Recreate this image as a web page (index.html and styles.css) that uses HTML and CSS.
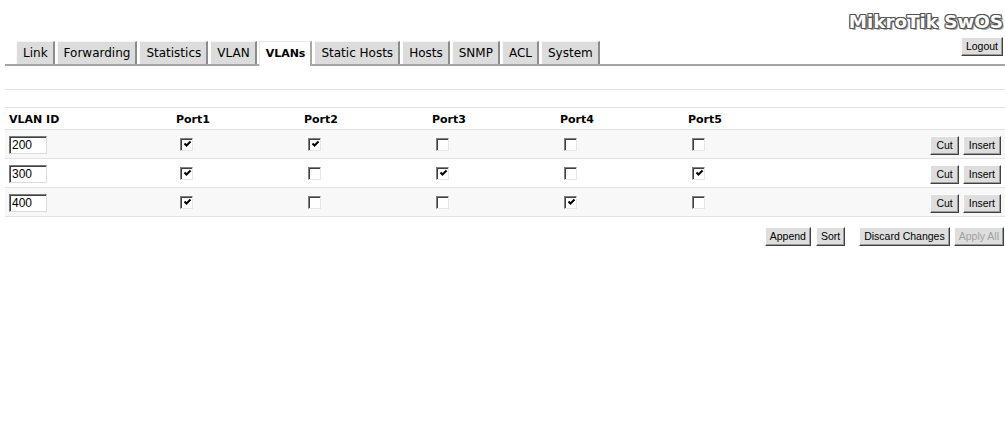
FILE: index.html
```html
<!DOCTYPE html>
<html>
<head>
<meta charset="utf-8">
<title>MikroTik SwOS</title>
<link rel="stylesheet" href="styles.css">
</head>
<body>
<div class="page">
  <header class="top">
    <nav class="tabs">
      <span class="tab">Link</span>
      <span class="tab">Forwarding</span>
      <span class="tab">Statistics</span>
      <span class="tab">VLAN</span>
      <span class="tab active">VLANs</span>
      <span class="tab">Static Hosts</span>
      <span class="tab">Hosts</span>
      <span class="tab">SNMP</span>
      <span class="tab">ACL</span>
      <span class="tab">System</span>
    </nav>
    <div class="brand">
      <div class="title">MikroTik SwOS</div>
      <button class="btn">Logout</button>
    </div>
  </header>
  <div class="spacer s1"></div>
  <div class="spacer s2"></div>
  <table class="grid">
    <colgroup>
      <col class="c-id"><col class="c-port"><col class="c-port"><col class="c-port"><col class="c-port"><col class="c-port"><col>
    </colgroup>
    <thead>
      <tr><th>VLAN ID</th><th>Port1</th><th>Port2</th><th>Port3</th><th>Port4</th><th>Port5</th><th></th></tr>
    </thead>
    <tbody>
      <tr class="odd">
        <td><input class="field" type="text" value="200"></td>
        <td><span class="cb on"><svg viewBox="0 0 9 9" width="9" height="9"><polyline points="1.5,3.5 3.5,5.5 7.5,1.5" fill="none" stroke="#000" stroke-width="2"/></svg></span></td>
        <td><span class="cb on"><svg viewBox="0 0 9 9" width="9" height="9"><polyline points="1.5,3.5 3.5,5.5 7.5,1.5" fill="none" stroke="#000" stroke-width="2"/></svg></span></td>
        <td><span class="cb"></span></td>
        <td><span class="cb"></span></td>
        <td><span class="cb"></span></td>
        <td class="ops"><button class="btn">Cut</button><button class="btn">Insert</button></td>
      </tr>
      <tr>
        <td><input class="field" type="text" value="300"></td>
        <td><span class="cb on"><svg viewBox="0 0 9 9" width="9" height="9"><polyline points="1.5,3.5 3.5,5.5 7.5,1.5" fill="none" stroke="#000" stroke-width="2"/></svg></span></td>
        <td><span class="cb"></span></td>
        <td><span class="cb on"><svg viewBox="0 0 9 9" width="9" height="9"><polyline points="1.5,3.5 3.5,5.5 7.5,1.5" fill="none" stroke="#000" stroke-width="2"/></svg></span></td>
        <td><span class="cb"></span></td>
        <td><span class="cb on"><svg viewBox="0 0 9 9" width="9" height="9"><polyline points="1.5,3.5 3.5,5.5 7.5,1.5" fill="none" stroke="#000" stroke-width="2"/></svg></span></td>
        <td class="ops"><button class="btn">Cut</button><button class="btn">Insert</button></td>
      </tr>
      <tr class="odd">
        <td><input class="field" type="text" value="400"></td>
        <td><span class="cb on"><svg viewBox="0 0 9 9" width="9" height="9"><polyline points="1.5,3.5 3.5,5.5 7.5,1.5" fill="none" stroke="#000" stroke-width="2"/></svg></span></td>
        <td><span class="cb"></span></td>
        <td><span class="cb"></span></td>
        <td><span class="cb on"><svg viewBox="0 0 9 9" width="9" height="9"><polyline points="1.5,3.5 3.5,5.5 7.5,1.5" fill="none" stroke="#000" stroke-width="2"/></svg></span></td>
        <td><span class="cb"></span></td>
        <td class="ops"><button class="btn">Cut</button><button class="btn">Insert</button></td>
      </tr>
    </tbody>
  </table>
  <div class="actions">
    <button class="btn">Append</button>
    <button class="btn b-sort">Sort</button>
    <button class="btn b-discard">Discard Changes</button>
    <button class="btn b-apply" disabled>Apply All</button>
  </div>
</div>
</body>
</html>
```

FILE: styles.css
```css
html, body {
  margin: 0;
  padding: 0;
  background: #fff;
}

body {
  font-family: "DejaVu Sans", Verdana, sans-serif;
  color: #000;
}

.page {
  padding-left: 5px;
}

.top {
  display: flex;
  justify-content: space-between;
  align-items: flex-end;
  border-bottom: 2px solid #a4a4a4;
  height: 64px;
}

.tabs {
  display: flex;
  align-items: flex-end;
  padding-left: 11px;
}

.tab {
  display: block;
  font-size: 12px;
  line-height: 15px;
  padding: 4px 5px 3px 6px;
  background: #dcdcdc;
  border-top: 1px solid #f4f4f4;
  border-left: 1px solid #fafafa;
  border-right: 2px solid #8c8c8c;
  margin-right: 2px;
  color: #000;
}

.tab.active {
  background: #fff;
  font-weight: bold;
  font-size: 11px;
  margin-bottom: -2px;
  padding-bottom: 5px;
  border-top: 1px solid #e8e8e8;
  border-left: 1px solid #e8e8e8;
  border-right: 2px solid #a8a8a8;
}

.brand {
  display: flex;
  flex-direction: column;
  align-items: flex-end;
  padding-right: 2px;
  margin-bottom: 8px;
}

.title {
  font-family: "DejaVu Sans", Verdana, sans-serif;
  font-weight: bold;
  font-size: 18.3px;
  line-height: 21px;
  color: #fff;
  padding-right: 0;
  text-shadow:
    1px 0 0 #555, -1px 0 0 #555, 0 1px 0 #555, 0 -1px 0 #555,
    1px 1px 0 #555, -1px -1px 0 #555, 1px -1px 0 #555, -1px 1px 0 #555,
    2px 2px 0 #aaa;
  margin-bottom: 5px;
}

.btn {
  font-family: "Liberation Sans", Arial, sans-serif;
  font-size: 10.5px;
  line-height: 15px;
  height: 19px;
  padding: 0 4px;
  margin: 0;
  background: #dedede;
  color: #000;
  border: 1px solid;
  border-color: #fdfdfd #404040 #404040 #fdfdfd;
  box-shadow: inset -1px -1px 0 #999;
  border-radius: 0;
  cursor: default;
}

.ops .btn {
  padding: 0 5px;
}

.btn:disabled {
  color: #a0a0a0;
}

.spacer {
  border-bottom: 1px solid #e2e2e2;
}

.s1 { height: 23px; }
.s2 { height: 17px; }

.grid {
  width: 1000px;
  border-collapse: collapse;
  table-layout: fixed;
}

.c-id { width: 167px; }
.c-port { width: 128px; }

.grid th {
  height: 20px;
  padding: 1px 0 0 4px;
  text-align: left;
  font-size: 11px;
  font-weight: bold;
  border-bottom: 1px solid #e2e2e2;
  vertical-align: middle;
}

.grid td {
  height: 28px;
  padding: 0 0 0 4px;
  border-bottom: 1px solid #e2e2e2;
  vertical-align: middle;
}

.grid tr.odd td {
  background: #f8f8f8;
}

.grid td.ops {
  text-align: right;
  padding-right: 4px;
  white-space: nowrap;
}

.ops .btn + .btn {
  margin-left: 4px;
}

.field {
  box-sizing: border-box;
  width: 38px;
  height: 18px;
  padding: 1px 2px 0 2px;
  margin: 1px 0 0 0;
  font-family: "Liberation Sans", Arial, sans-serif;
  font-size: 12px;
  border: 1px solid;
  border-color: #7a7a7a #dcdcdc #dcdcdc #7a7a7a;
  box-shadow: inset 1px 1px 0 #404040;
  background: #fff;
  outline: none;
  display: block;
}

.cb {
  box-sizing: border-box;
  display: flex;
  align-items: center;
  justify-content: center;
  width: 13px;
  height: 13px;
  margin-left: 4px;
  background: #fff;
  border: 1px solid;
  border-color: #808080 #e6e6e6 #e6e6e6 #808080;
  box-shadow: inset 1px 1px 0 #404040;
}

.cb svg {
  display: block;
  margin: 1px 0 0 1px;
}

.actions {
  display: flex;
  justify-content: flex-end;
  margin-top: 10px;
  padding-right: 1px;
}

.b-sort { margin-left: 5px; }
.b-discard { margin-left: 14px; }
.b-apply { margin-left: 4px; }
```
